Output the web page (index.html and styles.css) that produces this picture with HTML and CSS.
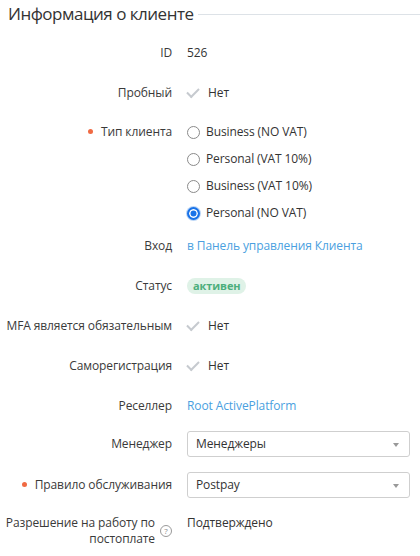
FILE: index.html
```html
<!DOCTYPE html>
<html lang="ru">
<head>
  <meta charset="UTF-8" />
  <meta name="viewport" content="width=device-width, initial-scale=1.0"/>
  <title>Информация о клиенте</title>
  <link rel="stylesheet" href="styles.css">
</head>
<body>

  <!-- Client info block -->
  <section class="panel">
    <h2 class="panel-title"><span>Информация о клиенте</span></h2>

    <div class="row">
      <div class="label">ID</div>
      <div class="value">526</div>
    </div>

    <div class="row">
      <div class="label">Пробный</div>
      <div class="value"><span class="check"></span>Нет</div>
    </div>

    <div class="row row-radios">
      <div class="label required">Тип клиента</div>
      <div class="value radios">
        <label class="radio"><span class="dot"></span>Business (NO VAT)</label>
        <label class="radio"><span class="dot"></span>Personal (VAT 10%)</label>
        <label class="radio"><span class="dot"></span>Business (VAT 10%)</label>
        <label class="radio checked"><span class="dot"></span>Personal (NO VAT)</label>
      </div>
    </div>

    <div class="row">
      <div class="label">Вход</div>
      <div class="value"><a href="#">в Панель управления Клиента</a></div>
    </div>

    <div class="row">
      <div class="label">Статус</div>
      <div class="value"><span class="badge">активен</span></div>
    </div>

    <div class="row">
      <div class="label">MFA является обязательным</div>
      <div class="value"><span class="check"></span>Нет</div>
    </div>

    <div class="row">
      <div class="label">Саморегистрация</div>
      <div class="value"><span class="check"></span>Нет</div>
    </div>

    <div class="row">
      <div class="label">Реселлер</div>
      <div class="value"><a href="#">Root ActivePlatform</a></div>
    </div>

    <div class="row row-select">
      <div class="label">Менеджер</div>
      <div class="value"><div class="select">Менеджеры</div></div>
    </div>

    <div class="row row-select">
      <div class="label required">Правило обслуживания</div>
      <div class="value"><div class="select">Postpay</div></div>
    </div>

    <div class="row row-wrap">
      <div class="label with-help">
        <span>Разрешение на работу по<br>постоплате</span>
        <span class="help">?</span>
      </div>
      <div class="value">Подтверждено</div>
    </div>
  </section>

</body>
</html>
```

FILE: styles.css
```css
body {
  margin: 0;
  font-family: "Open Sans", "Liberation Sans", sans-serif;
  font-size: 12px;
  letter-spacing: -0.1px;
  color: #333;
  background: #fff;
}
.panel {
  padding: 0 10px 0 0;
}
.panel-title {
  display: flex;
  align-items: center;
  margin: 0 0 0 8px;
  height: 26px;
  font-size: 17px;
  font-weight: 400;
  letter-spacing: -0.5px;
  color: #333;
}
.panel-title::after {
  content: "";
  flex: 1;
  height: 1px;
  margin: 2px -10px 0 5px;
  background: #dde2e7;
}
.row {
  display: grid;
  grid-template-columns: 172px 1fr;
  column-gap: 15px;
  line-height: 20px;
  margin-top: 20px;
}
.panel-title + .row {
  margin-top: 17px;
}
.label {
  text-align: right;
  white-space: nowrap;
  color: #3a3a3a;
}
.required::before {
  content: "";
  display: inline-block;
  width: 5px;
  height: 5px;
  margin: 0 8px 2px 0;
  border-radius: 50%;
  background: #f06a43;
  vertical-align: middle;
}
.value {
  display: flex;
  align-items: center;
}
.value a {
  color: #4a9fe0;
  text-decoration: none;
}
.check {
  width: 10px;
  height: 5px;
  margin: 0 9px 3px 0;
  border-left: 2.5px solid #c6cacf;
  border-bottom: 2.5px solid #c6cacf;
  transform: rotate(-45deg);
}

/* radio list */
.row-radios {
  margin-top: 19px;
}
.row-radios + .row {
  margin-top: 13px;
}
.radios {
  flex-direction: column;
  align-items: flex-start;
  gap: 7px;
}
.radio {
  display: flex;
  align-items: center;
}
.radio .dot {
  box-sizing: border-box;
  width: 13px;
  height: 13px;
  margin-right: 6px;
  border: 1px solid #8a8a8a;
  border-radius: 50%;
  background: #fff;
}
.radio.checked .dot {
  border: 2px solid #1a73e8;
  background: #1a73e8;
  box-shadow: inset 0 0 0 1.5px #fff, 0 0 0 1px #bcd6f6;
}

.badge {
  padding: 0 6px;
  line-height: 16px;
  border-radius: 8px;
  background: #dff2e7;
  color: #4cae7c;
  font-size: 11px;
  font-weight: 700;
}

/* select rows */
.row-select {
  line-height: 26px;
  margin-top: 15px;
}
.select {
  position: relative;
  box-sizing: border-box;
  width: 100%;
  height: 26px;
  padding: 0 8px;
  border: 1px solid #cfcfcf;
  border-radius: 3px;
  line-height: 24px;
  color: #333;
}
.select::after {
  content: "";
  position: absolute;
  right: 10px;
  top: 11px;
  border-left: 3px solid transparent;
  border-right: 3px solid transparent;
  border-top: 4px solid #999;
}

.row-wrap {
  margin-top: 17px;
  line-height: 16px;
}
.row-wrap .value {
  align-items: flex-start;
}
.with-help {
  display: flex;
  align-items: center;
  justify-content: flex-end;
}
.help {
  flex: none;
  width: 10px;
  height: 10px;
  margin-left: 5px;
  border: 1px solid #9a9a9a;
  border-radius: 50%;
  color: #8a8a8a;
  font-size: 8px;
  line-height: 10px;
  text-align: center;
}
```
